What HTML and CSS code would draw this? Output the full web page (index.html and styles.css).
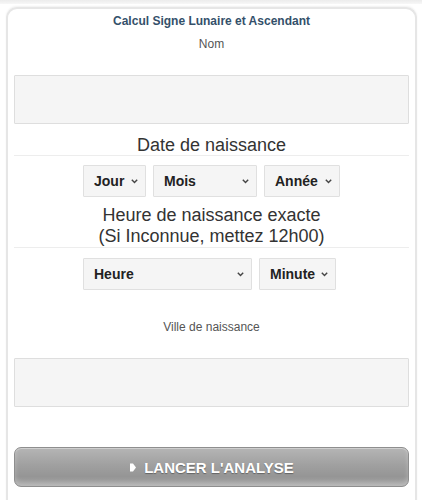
FILE: index.html
```html
<!DOCTYPE html>
<html lang="fr">
<head>
<meta charset="utf-8">
<title>Calcul Signe Lunaire et Ascendant</title>
<link rel="stylesheet" href="styles.css">
</head>
<body>
<div class="topshade"></div>
<form class="card">
  <h1 class="title">Calcul Signe Lunaire et Ascendant</h1>
  <label class="label label-nom" for="nom">Nom</label>
  <input class="field" id="nom" type="text">

  <div class="section">Date de naissance</div>
  <div class="row row-date">
    <span class="selwrap sel-jour"><select class="sel"><option>Jour</option></select><svg class="chev" width="7" height="5" viewBox="0 0 7 5"><polyline points="0.8,0.8 3.5,3.6 6.2,0.8" fill="none" stroke="#444" stroke-width="1.4"/></svg></span>
    <span class="selwrap sel-mois"><select class="sel"><option>Mois</option></select><svg class="chev" width="7" height="5" viewBox="0 0 7 5"><polyline points="0.8,0.8 3.5,3.6 6.2,0.8" fill="none" stroke="#444" stroke-width="1.4"/></svg></span>
    <span class="selwrap sel-annee"><select class="sel"><option>Année</option></select><svg class="chev" width="7" height="5" viewBox="0 0 7 5"><polyline points="0.8,0.8 3.5,3.6 6.2,0.8" fill="none" stroke="#444" stroke-width="1.4"/></svg></span>
  </div>

  <div class="section section-two">Heure de naissance exacte<br>(Si Inconnue, mettez 12h00)</div>
  <div class="row row-time">
    <span class="selwrap sel-heure"><select class="sel"><option>Heure</option></select><svg class="chev" width="7" height="5" viewBox="0 0 7 5"><polyline points="0.8,0.8 3.5,3.6 6.2,0.8" fill="none" stroke="#444" stroke-width="1.4"/></svg></span>
    <span class="selwrap sel-minute"><select class="sel"><option>Minute</option></select><svg class="chev" width="7" height="5" viewBox="0 0 7 5"><polyline points="0.8,0.8 3.5,3.6 6.2,0.8" fill="none" stroke="#444" stroke-width="1.4"/></svg></span>
  </div>

  <label class="label label-ville" for="ville">Ville de naissance</label>
  <input class="field" id="ville" type="text">

  <button class="submit" type="button">
    <svg class="arrow" width="6" height="9" viewBox="0 0 6 9"><polygon points="0,0.5 3,0.5 6,4.5 3,8.5 0,8.5" fill="#fff"/></svg>
    <span>LANCER L'ANALYSE</span>
  </button>
</form>
</body>
</html>
```
FILE: styles.css
```css
html, body {
  margin: 0;
  padding: 0;
  background: #ffffff;
  font-family: "Liberation Sans", Arial, sans-serif;
}
body {
  height: 500px;
  overflow: hidden;
}
.topshade {
  height: 4px;
  background: linear-gradient(#ececec, #f7f7f7);
}
.card {
  margin: 3px 5px 0 6px;
  border: 2px solid #e6e6e6;
  border-bottom: none;
  border-radius: 11px 11px 0 0;
  box-shadow: 0 -1px 2px rgba(0,0,0,0.06);
  padding: 0 6px 20px;
  display: flex;
  flex-direction: column;
  align-items: stretch;
}
.title {
  margin: 4px 0 0;
  font-size: 12px;
  line-height: 16px;
  font-weight: bold;
  color: #34506a;
  text-align: center;
}
.label {
  display: block;
  font-size: 12px;
  line-height: 16px;
  color: #555;
  text-align: center;
}
.label-nom {
  margin-top: 7px;
}
.label-ville {
  margin-top: 29px;
}
.field {
  display: block;
  box-sizing: border-box;
  width: 100%;
  height: 49px;
  margin: 23px 0 0;
  background: #f5f5f5;
  border: 1px solid #dedede;
  border-radius: 1px;
  outline: none;
}
.section {
  margin-top: 11px;
  font-size: 18px;
  line-height: 20px;
  color: #333;
  text-align: center;
  border-bottom: 1px solid #ededed;
}
.section-two {
  margin-top: 8px;
  line-height: 21px;
}
.row {
  display: flex;
  justify-content: center;
  gap: 7px;
  margin-top: 9px;
}
.row-time {
  margin-top: 10px;
  padding-right: 4px;
}
.selwrap {
  position: relative;
  display: block;
  height: 32px;
}
.sel {
  -webkit-appearance: none;
  appearance: none;
  box-sizing: border-box;
  display: block;
  width: 100%;
  height: 32px;
  margin: 0;
  padding: 0 16px 0 10px;
  background: #f5f5f5;
  border: 1px solid #e0e0e0;
  border-radius: 1px;
  font-family: "Liberation Sans", Arial, sans-serif;
  font-size: 14px;
  font-weight: bold;
  color: #222;
  outline: none;
}
.chev {
  position: absolute;
  right: 8px;
  top: 14px;
  pointer-events: none;
}
.sel-jour { width: 63px; }
.sel-mois { width: 104px; }
.sel-annee { width: 76px; }
.sel-heure { width: 169px; }
.sel-minute { width: 77px; }
.submit {
  margin-top: 40px;
  height: 40px;
  display: flex;
  align-items: center;
  justify-content: center;
  gap: 8px;
  border: 1px solid #8e8e8e;
  border-radius: 7px;
  background: linear-gradient(#b5b5b5 0%, #a0a0a0 45%, #959595 75%, #a6a6a6 100%);
  box-shadow: inset 0 1px 0 rgba(255,255,255,0.35), inset 0 -3px 5px rgba(255,255,255,0.25);
  color: #fff;
  font-family: "Liberation Sans", Arial, sans-serif;
  font-size: 15px;
  font-weight: bold;
  text-shadow: 0 1px 1px rgba(0,0,0,0.35);
  padding: 0 0 0 1px;
}
.arrow {
  display: block;
}
```
